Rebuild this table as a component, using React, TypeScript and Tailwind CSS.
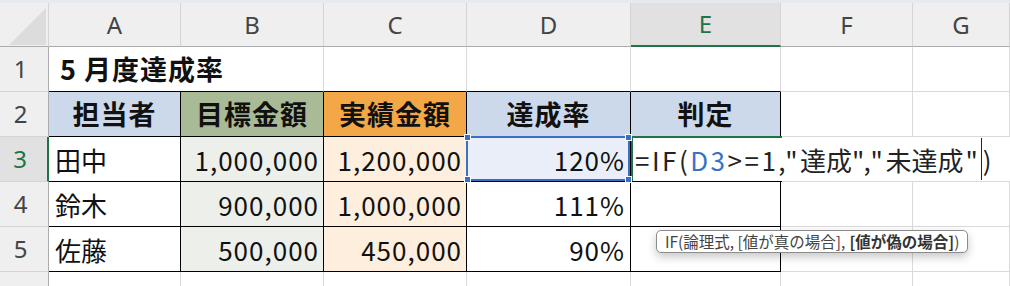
import clsx from "clsx";
import type { ReactNode } from "react";

function ColHead({ label, active }: { label: string; active?: boolean }) {
  return (
    <div
      className={clsx(
        "flex items-center justify-center border-r border-r-[#d4d4d4] text-[24px] font-['Noto_Sans',sans-serif]",
        active
          ? "bg-[#e1e1e1] border-b-2 border-b-[#217346] text-[#217346]"
          : "bg-[#efefef] border-b border-b-[#ababab] text-[#444]"
      )}
    >
      {label}
    </div>
  );
}

function RowHead({ n, active }: { n: number; active?: boolean }) {
  return (
    <div
      className={clsx(
        "flex items-center justify-center pr-[7px] border-b border-b-[#d4d4d4] text-[24px] font-['Noto_Sans',sans-serif]",
        active
          ? "bg-[#e1e1e1] border-r-2 border-r-[#217346] text-[#217346]"
          : "bg-[#efefef] border-r border-r-[#ababab] text-[#444]"
      )}
    >
      {n}
    </div>
  );
}

function Cell({
  children,
  className,
  rb,
  bb,
}: {
  children?: ReactNode;
  className?: string;
  rb?: boolean;
  bb?: boolean;
}) {
  return (
    <div
      className={clsx(
        "flex items-center border-r border-b whitespace-nowrap",
        rb ? "border-r-black" : "border-r-[#dadada]",
        bb ? "border-b-black" : "border-b-[#dadada]",
        className
      )}
    >
      {children}
    </div>
  );
}

// number cells: right aligned, a touch of tracking for Excel-wide digits
const num = "justify-end pr-[4px] text-[26px] tracking-[1px]";
const head = "justify-center text-[27px] font-bold tracking-[1px]";

const rows = [
  { n: 4, name: "鈴木", target: "900,000", actual: "1,000,000", rate: "111%" },
  { n: 5, name: "佐藤", target: "500,000", actual: "450,000", rate: "90%" },
];

export default function App() {
  return (
    <div className="h-[286px] w-[1010px] overflow-hidden bg-white font-['Noto_Sans_CJK_JP',sans-serif] text-[#111]">
      <div className="h-[3px] bg-[#e6e9ee]" />
      <div className="relative grid grid-cols-[49px_132px_143px_143px_164px_150px_132px_97px] grid-rows-[44px_repeat(6,45px)]">
        {/* column headers */}
        <div className="relative border-r border-b border-r-[#d4d4d4] border-b-[#ababab] bg-[#efefef]">
          <svg className="absolute left-[9px] top-[5px]" width="37" height="37" viewBox="0 0 37 37">
            <polygon points="0,37 37,37 37,0" fill="#dcdcdc" />
          </svg>
        </div>
        <ColHead label="A" />
        <ColHead label="B" />
        <ColHead label="C" />
        <ColHead label="D" />
        <ColHead label="E" active />
        <ColHead label="F" />
        <ColHead label="G" />

        {/* row 1 */}
        <RowHead n={1} />
        <Cell bb className="col-span-2 pl-[11px] text-[27px] font-bold tracking-[1px]">
          5 月度達成率
        </Cell>
        <Cell bb />
        <Cell bb />
        <Cell bb />
        <Cell />
        <Cell />

        {/* row 2 */}
        <RowHead n={2} />
        <Cell rb bb className={clsx(head, "bg-[#ccd9ea]")}>担当者</Cell>
        <Cell rb bb className={clsx(head, "bg-[#a9ba97]")}>目標金額</Cell>
        <Cell rb bb className={clsx(head, "bg-[#f4a747]")}>実績金額</Cell>
        <Cell rb bb className={clsx(head, "bg-[#ccd9ea]")}>達成率</Cell>
        <Cell rb bb className={clsx(head, "bg-[#ccd9ea]")}>判定</Cell>
        <Cell />
        <Cell />

        {/* row 3 */}
        <RowHead n={3} active />
        <Cell rb bb className="pl-[6px] text-[26px]">田中</Cell>
        <Cell rb bb className={clsx(num, "bg-[#edefeb]")}>1,000,000</Cell>
        <Cell rb bb className={clsx(num, "bg-[#fdeedd]")}>1,200,000</Cell>
        <Cell rb bb className={clsx(num, "relative bg-[#e9eef8] pr-[5px]")}>
          120%
          <div className="absolute left-[-1px] top-[-1px] right-0 bottom-0 z-10 border-2 border-[#3b6fc5]">
            <span className="absolute left-[-4px] top-[-4px] h-[7px] w-[7px] border border-white bg-[#3b6fc5]" />
            <span className="absolute right-[-4px] top-[-4px] h-[7px] w-[7px] border border-white bg-[#3b6fc5]" />
            <span className="absolute left-[-4px] bottom-[-4px] h-[7px] w-[7px] border border-white bg-[#3b6fc5]" />
            <span className="absolute right-[-4px] bottom-[-4px] h-[7px] w-[7px] border border-white bg-[#3b6fc5]" />
          </div>
        </Cell>
        <div className="relative col-span-3 flex items-center whitespace-nowrap border-b border-b-[#dadada] border-l-2 border-l-[#217346] bg-white pl-[2px] text-[26px] text-[#222]">
          <div className="absolute left-[-2px] top-[-1px] h-[2px] w-[151px] bg-[#217346]" />
          <div className="absolute left-[-2px] bottom-[-1px] h-[1px] w-[151px] bg-black" />
          <span className="tracking-[2.5px]">=IF(</span>
          <span className="tracking-[2.5px] text-[#3a72c6]">D3</span>
          <span className="tracking-[2.5px]">&gt;=1,"</span>
          <span>達成</span>
          <span className="tracking-[2.5px]">","</span>
          <span>未達成</span>
          <span className="pl-[2px]">"</span>
          <span className="ml-[3px] mr-[1px] inline-block h-[42px] w-[1px] bg-[#222]" />
          <span>)</span>
        </div>

        {/* rows 4-5 */}
        {rows.map((r) => (
          <div key={r.n} className="contents">
            <RowHead n={r.n} />
            <Cell rb bb className="pl-[6px] text-[26px]">{r.name}</Cell>
            <Cell rb bb className={clsx(num, "bg-[#edefeb]")}>{r.target}</Cell>
            <Cell rb bb className={clsx(num, "bg-[#fdeedd]")}>{r.actual}</Cell>
            <Cell rb bb className={clsx(num, "pr-[5px]")}>{r.rate}</Cell>
            <Cell rb bb />
            <Cell />
            <Cell />
          </div>
        ))}

        {/* row 6 */}
        <RowHead n={6} />
        <Cell />
        <Cell />
        <Cell />
        <Cell />
        <Cell />
        <Cell />
        <Cell />

        {/* function tooltip */}
        <div className="absolute left-[656px] top-[227px] z-20 flex h-[23px] items-center whitespace-nowrap rounded-[5px] border border-[#8c8c8c] bg-white px-[8px] text-[15.5px] text-[#444] shadow-[0_4px_10px_rgba(0,0,0,0.22)]">
          IF(論理式, [値が真の場合], <b className="ml-[4px] font-bold text-[#333]">[値が偽の場合]</b>)
        </div>
      </div>
    </div>
  );
}
